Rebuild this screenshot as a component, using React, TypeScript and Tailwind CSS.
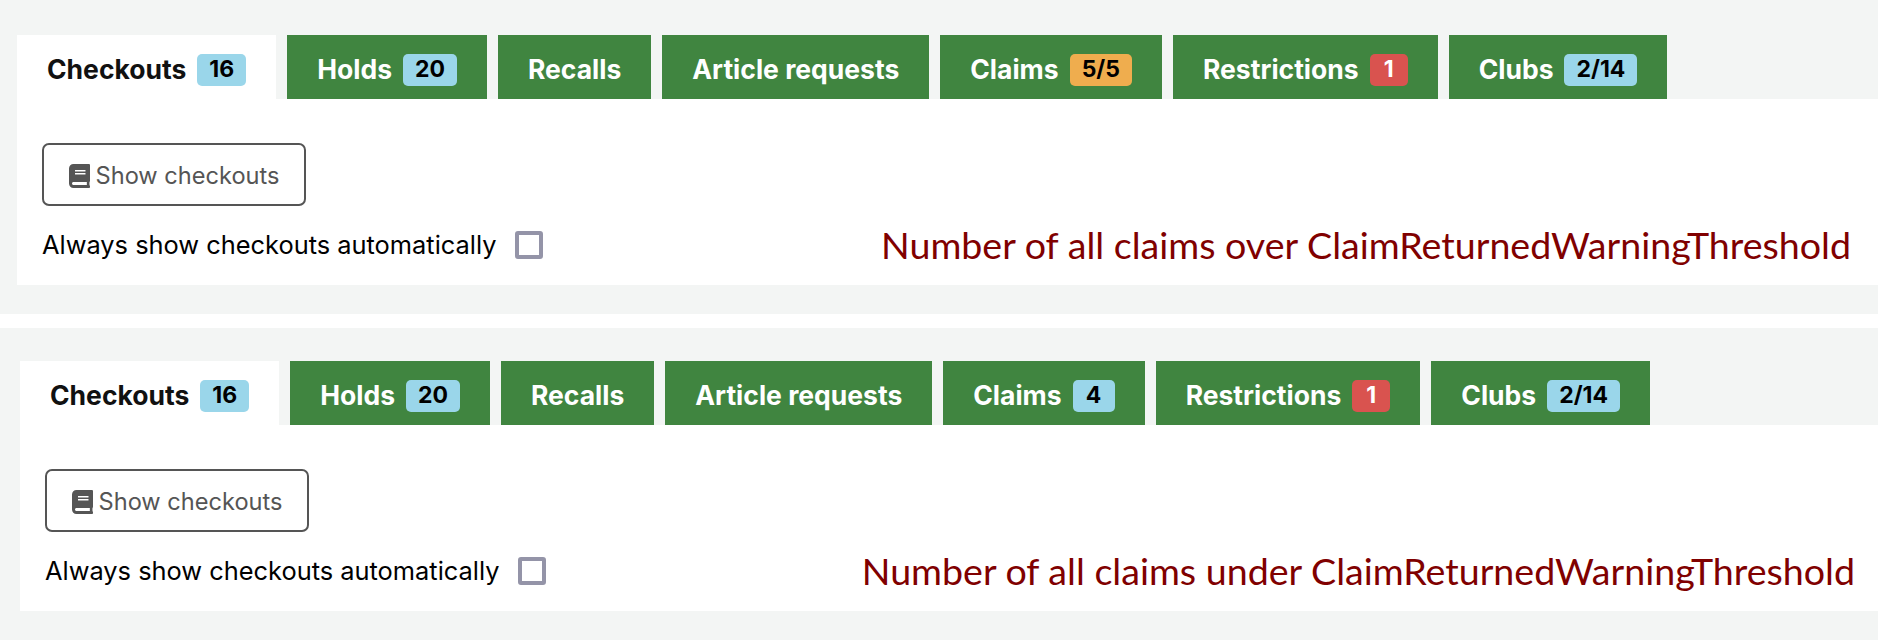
import { FaBook } from 'react-icons/fa';

type Tab = { label: string; badge?: string; color?: string };

const overTabs: Tab[] = [
  { label: 'Checkouts', badge: '16', color: 'bg-[#9ad6ea] text-black' },
  { label: 'Holds', badge: '20', color: 'bg-[#9ad6ea] text-black' },
  { label: 'Recalls' },
  { label: 'Article requests' },
  { label: 'Claims', badge: '5/5', color: 'bg-[#efad4e] text-black' },
  { label: 'Restrictions', badge: '1', color: 'bg-[#d9534f] text-white min-w-[38px]' },
  { label: 'Clubs', badge: '2/14', color: 'bg-[#9ad6ea] text-black' },
];

const underTabs: Tab[] = [
  { label: 'Checkouts', badge: '16', color: 'bg-[#9ad6ea] text-black' },
  { label: 'Holds', badge: '20', color: 'bg-[#9ad6ea] text-black' },
  { label: 'Recalls' },
  { label: 'Article requests' },
  { label: 'Claims', badge: '4', color: 'bg-[#9ad6ea] text-black min-w-[42px]' },
  { label: 'Restrictions', badge: '1', color: 'bg-[#d9534f] text-white min-w-[38px]' },
  { label: 'Clubs', badge: '2/14', color: 'bg-[#9ad6ea] text-black' },
];

function CheckoutPanel({ tabs, note, padRight }: { tabs: Tab[]; note: string; padRight: string }) {
  return (
    <div className="font-['Inter',sans-serif]">
      {/* Tabs */}
      <div className="flex gap-[11px] h-[64px]">
        {tabs.map((tab, index) => (
          <div
            key={tab.label}
            className={`flex items-center gap-[11px] pt-[5px] px-[30px] text-[26.5px] font-bold ${
              index === 0 ? 'bg-white text-[#111]' : 'bg-[#408540] text-white'
            }`}
          >
            {tab.label}
            {tab.badge && (
              <span className={`h-[32px] flex items-center justify-center px-[12px] rounded-[5px] text-[23px] font-bold ${tab.color}`}>
                {tab.badge}
              </span>
            )}
          </div>
        ))}
      </div>
      <div className={`bg-white h-[186px] pl-[25px] ${padRight} pt-[44px]`}>
        <button className="w-[264px] h-[63px] border-2 border-[#555] rounded-[7px] flex items-center justify-center gap-[6px] pt-[3px] text-[23.6px] text-[#555]">
          <FaBook className="w-[21px] h-[24px]" />
          Show checkouts
        </button>
        <div className="flex items-center justify-between mt-[11px]">
          <label className="flex items-center gap-[18px] text-[25.4px] text-black">
            Always show checkouts automatically
            <span className="w-[28px] h-[28px] border-[4px] border-[#9494a8] rounded-[3px] bg-white" />
          </label>
          <span className="font-['Lato',sans-serif] text-[37.6px] text-[#800000]">{note}</span>
        </div>
      </div>
    </div>
  );
}

export default function App() {
  return (
    <div className="bg-[#f3f5f4] h-[640px] overflow-hidden">
      <div className="pt-[35px] pl-[17px] pb-[29px]">
        <CheckoutPanel tabs={overTabs} note="Number of all claims over ClaimReturnedWarningThreshold" padRight="pr-[27px]" />
      </div>
      <div className="h-[14px] bg-white" />
      <div className="pt-[33px] pl-[20px]">
        <CheckoutPanel tabs={underTabs} note="Number of all claims under ClaimReturnedWarningThreshold" padRight="pr-[23px]" />
      </div>
    </div>
  );
}
